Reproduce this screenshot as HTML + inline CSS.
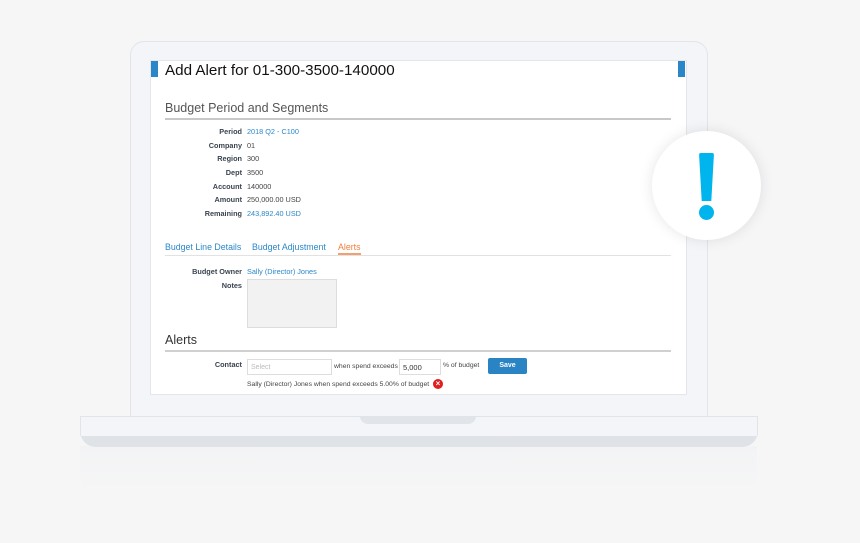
<!DOCTYPE html>
<html><head><style>
*{margin:0;padding:0;box-sizing:border-box}
body{width:860px;height:543px;background:#f6f6f7;position:relative;overflow:hidden;font-family:"Liberation Sans",sans-serif}
.a{position:absolute}
.lbl{position:absolute;width:90px;left:152px;text-align:right;font-size:7.3px;font-weight:bold;color:#3a4450}
.val{position:absolute;left:247px;font-size:7.3px;color:#444}
.blue{color:#2b87c9}
</style></head><body>
<div class="a" style="left:80px;top:446px;width:677px;height:50px;background:linear-gradient(#f0f1f3,#f6f6f7);border-radius:0 0 20px 20px;opacity:.6"></div>
<div class="a" style="left:130px;top:41px;width:578px;height:380px;background:#f3f5f8;border:1.5px solid #e1e5ea;border-radius:14px 14px 0 0"></div>
<div class="a" style="left:150px;top:60px;width:537px;height:335px;background:#fff;border:1px solid #e3e6ea"></div>
<div class="a" style="left:151px;top:61px;width:7px;height:16px;background:#2a86c6"></div>
<div class="a" style="left:678px;top:61px;width:7px;height:16px;background:#2a86c6"></div>
<div class="a" style="left:80px;top:416px;width:678px;height:31px;background:#dfe2e6;border-radius:0 0 16px 16px"></div>
<div class="a" style="left:80px;top:416px;width:678px;height:20px;background:#f3f5f8;border:1px solid #e1e5ea;border-bottom:none"></div>
<div class="a" style="left:360px;top:416px;width:116px;height:8px;background:#e1e4e8;border-radius:0 0 8px 8px"></div>

<div class="a" style="left:165px;top:62px;font-size:15.2px;color:#111">Add Alert for 01-300-3500-140000</div>
<div class="a" style="left:165px;top:101px;font-size:12.5px;color:#555">Budget Period and Segments</div>
<div class="a" style="left:165px;top:118px;width:506px;height:1.5px;background:#c8c8c8"></div>
<div class="lbl" style="top:127px">Period</div><div class="val blue" style="top:127px">2018 Q2 - C100</div>
<div class="lbl" style="top:141px">Company</div><div class="val" style="top:141px">01</div>
<div class="lbl" style="top:154px">Region</div><div class="val" style="top:154px">300</div>
<div class="lbl" style="top:168px">Dept</div><div class="val" style="top:168px">3500</div>
<div class="lbl" style="top:182px">Account</div><div class="val" style="top:182px">140000</div>
<div class="lbl" style="top:195px">Amount</div><div class="val" style="top:195px">250,000.00 USD</div>
<div class="lbl" style="top:209px">Remaining</div><div class="val blue" style="top:209px">243,892.40 USD</div>

<div class="a blue" style="left:165px;top:242px;font-size:8.8px">Budget Line Details</div>
<div class="a blue" style="left:252px;top:242px;font-size:8.8px">Budget Adjustment</div>
<div class="a" style="left:338px;top:242px;font-size:8.8px;color:#f07f3c">Alerts</div>
<div class="a" style="left:165px;top:255px;width:506px;height:1px;background:#e2e2e2"></div>
<div class="a" style="left:338px;top:253px;width:23px;height:2px;background:#f3a070"></div>

<div class="lbl" style="top:267px">Budget Owner</div><div class="val blue" style="top:267px">Sally (Director) Jones</div>
<div class="lbl" style="top:281px">Notes</div>
<div class="a" style="left:247px;top:279px;width:90px;height:49px;background:#f2f2f2;border:1px solid #ddd"></div>

<div class="a" style="left:165px;top:333px;font-size:12.5px;color:#333">Alerts</div>
<div class="a" style="left:165px;top:350px;width:506px;height:2px;background:#d0d0d0"></div>
<div class="lbl" style="top:360px">Contact</div>
<div class="a" style="left:247px;top:359px;width:85px;height:16px;border:1px solid #ddd;font-size:7px;color:#bbb;padding:4px 3px">Select</div>
<div class="val" style="left:334px;top:363px;font-size:6.8px">when spend exceeds</div>
<div class="a" style="left:399px;top:359px;width:42px;height:16px;border:1px solid #ddd;font-size:7.5px;color:#333;padding:3px 3px">5,000</div>
<div class="val" style="left:443px;top:362px;font-size:6.8px">% of budget</div>
<div class="a" style="left:488px;top:358px;width:39px;height:16px;background:#2a84c4;border-radius:2px;color:#fff;font-size:7px;font-weight:bold;text-align:center;line-height:16px">Save</div>
<div class="val" style="top:381px;font-size:6.8px">Sally (Director) Jones when spend exceeds 5.00% of budget</div>
<div class="a" style="left:433px;top:379px;width:10px;height:10px;border-radius:50%;background:#e02020;color:#fff;font-size:8px;line-height:10px;text-align:center;font-weight:bold">×</div>

<div class="a" style="left:652px;top:131px;width:109px;height:109px;border-radius:50%;background:#fff;box-shadow:0 0 14px rgba(0,0,0,.1)"></div>
<div class="a" style="left:699px;top:153px;width:15px;height:48px;background:#00b4ee;border-radius:2px;clip-path:polygon(0 0,100% 0,82% 100%,18% 100%)"></div>
<div class="a" style="left:699px;top:205px;width:15px;height:15px;border-radius:50%;background:#00b4ee"></div>
</body></html>
